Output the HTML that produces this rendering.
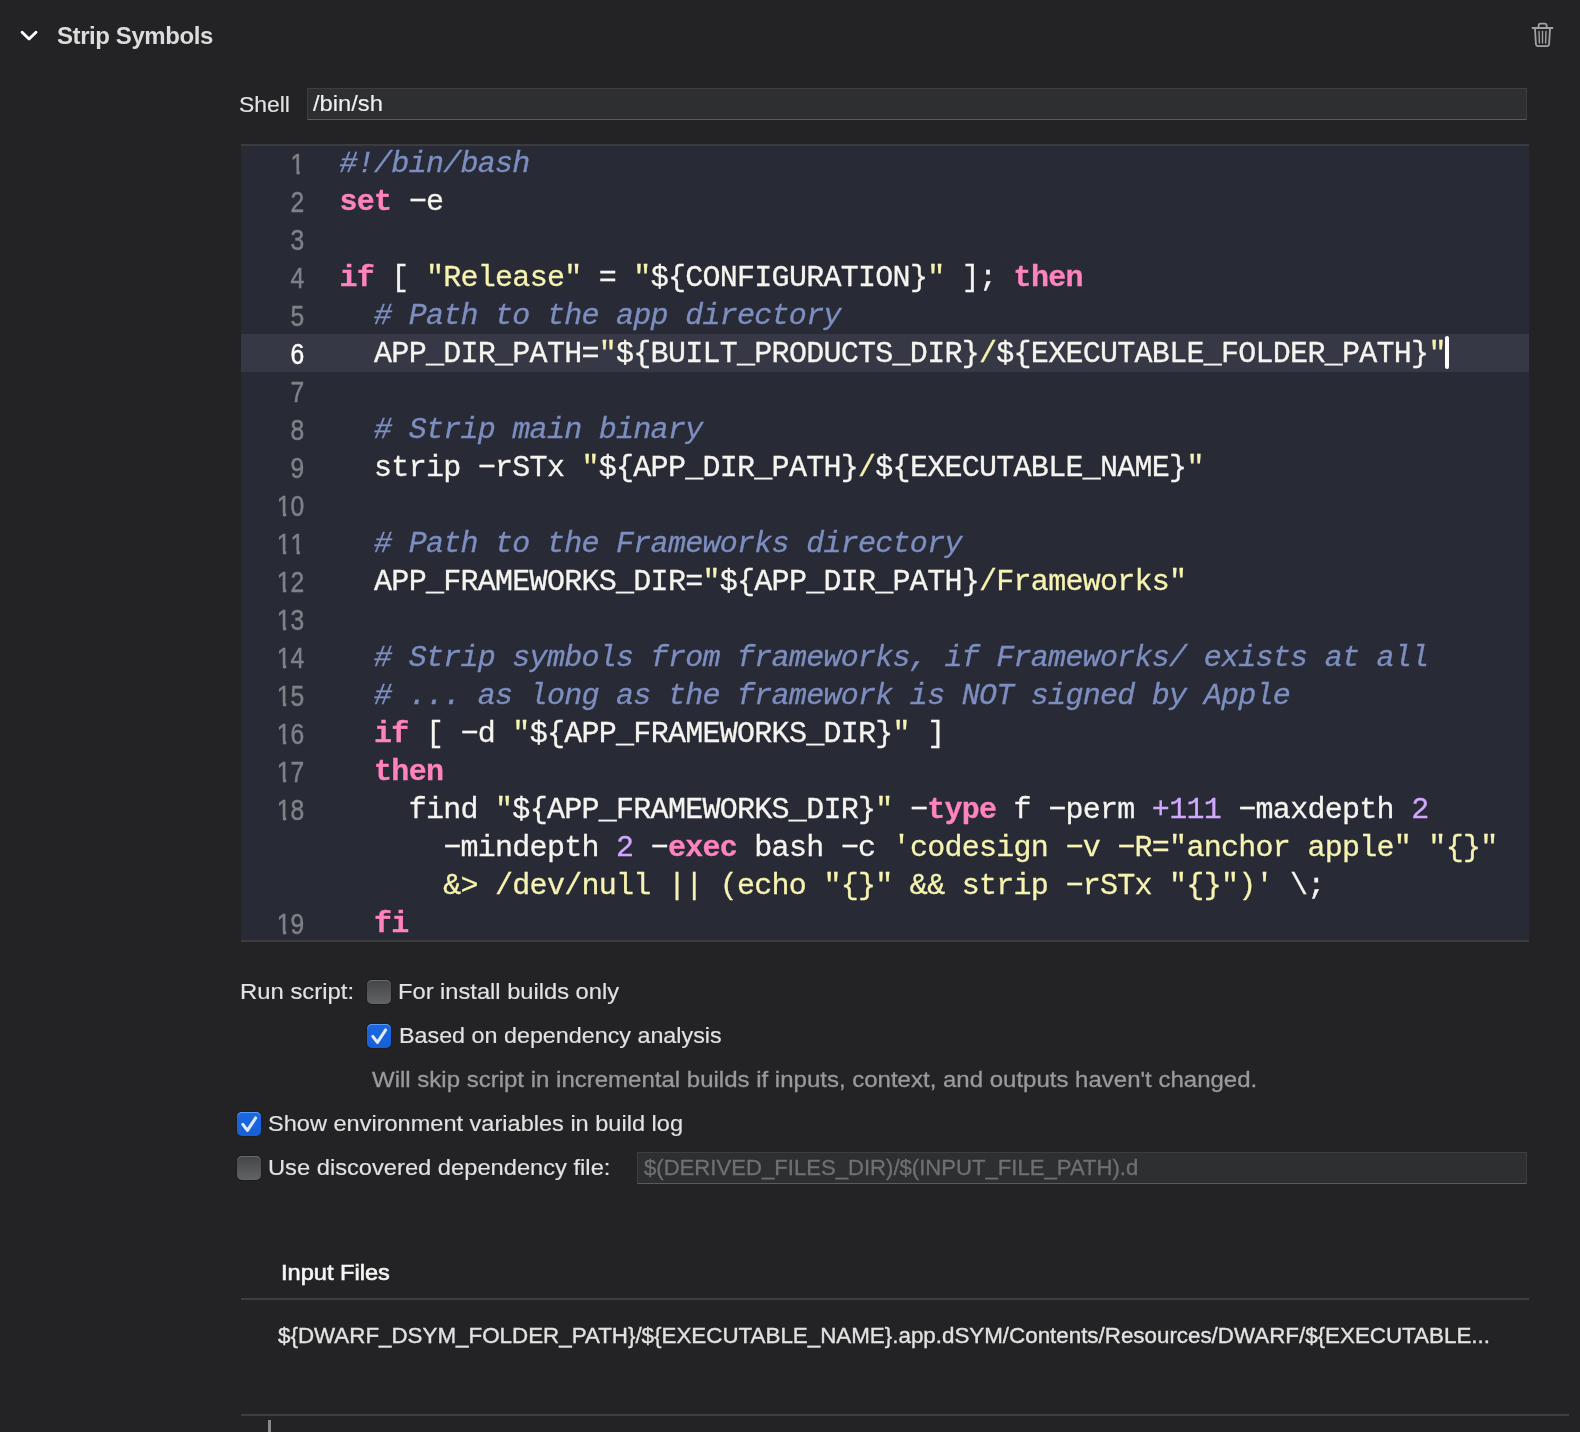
<!DOCTYPE html>
<html><head><meta charset="utf-8">
<style>
html,body{margin:0;padding:0}
body{width:1580px;height:1432px;background:#232325;position:relative;overflow:hidden;font-family:"Liberation Sans",sans-serif;color:#dfdfdf}
.a{position:absolute;white-space:pre;line-height:1}
.ui{-webkit-text-stroke:0.15px currentColor}
#wrap{position:absolute;left:0;top:0;width:1580px;height:1432px;will-change:transform}
.ui{font-size:24px;color:#e2e2e2}
#title{left:57px;top:24px;font-size:24px;font-weight:bold;color:#dcdcdc;letter-spacing:-0.42px}
.field{position:absolute;background:#2e2f31;border:1px solid #3d3e40;border-bottom-color:#5a5b5d;box-sizing:border-box}
#editor{position:absolute;left:241px;top:144px;width:1288px;height:798px;background:#282a36;overflow:hidden}
#editor .bt{position:absolute;left:0;top:0;width:100%;height:2px;background:#3c3c3f}
#editor .bb{position:absolute;left:0;bottom:0;width:100%;height:2px;background:#3c3c3f}
.hl{position:absolute;left:0;top:190px;width:100%;height:38px;background:#363846}
.row{position:absolute;left:0;height:38px;width:100%}
.ln{position:absolute;right:1225px;top:0;height:38px;line-height:38px;font-family:"Liberation Sans",sans-serif;font-size:29px;color:#7f8186;text-align:right;white-space:pre;letter-spacing:0;transform:scaleX(0.85);transform-origin:right center;margin-top:1px;-webkit-text-stroke:0.45px currentColor}
.cur .ln{color:#fff}
.one{display:inline-block;clip-path:polygon(0 0,100% 0,100% 25.4px,11.0px 25.4px,11.0px 100%,7.1px 100%,7.1px 25.4px,0 25.4px)}
.cursor{position:absolute;left:1204px;top:192px;width:4px;height:33px;border-radius:2px;background:#fff}
.cd{position:absolute;left:98.5px;top:1px;height:38px;line-height:38px;font-family:"Liberation Mono",monospace;font-size:30px;letter-spacing:-0.72px;color:#f5f4ef;white-space:pre;-webkit-text-stroke:0.3px currentColor}
.k{color:#ff84bd;font-weight:bold}
.s{color:#f7f3b0}
.c{color:#7d8ec0;font-style:italic}
.n{color:#d0a8ff}
.cb{position:absolute;width:24px;height:24px;border-radius:5px;box-sizing:border-box}
.cbg{background:linear-gradient(#434547,#626365);box-shadow:0 0 0 1px #1d1d1f, inset 0 1px 0 #6c6c6e}
.cbb{background:linear-gradient(#1b68e4,#1660d6);box-shadow:0 0 0 1px #1d1d1f, inset 0 1px 0 #5c9cf8}
.cbb svg{position:absolute;left:0;top:0}
.sep{position:absolute;height:2px;background:#3d3e41}
</style></head><body><div id="wrap">

<svg class="a" style="left:0;top:0" width="60" height="60" viewBox="0 0 60 60"><polyline points="22.1,32.3 29.05,39.0 36.0,32.3" fill="none" stroke="#fff" stroke-width="2.9" stroke-linecap="round" stroke-linejoin="round"/></svg>
<div id="title" class="a">Strip Symbols</div>

<svg class="a" style="left:1520px;top:15px" width="45" height="40" viewBox="1520 15 45 40">
<g fill="none" stroke="#a2a2a4" stroke-width="1.8" stroke-linecap="round">
<line x1="1532.5" y1="28" x2="1552.5" y2="28"/>
<path d="M1538.6 27.5 V25.6 Q1538.6 23.6 1540.6 23.6 H1544.6 Q1546.6 23.6 1546.6 25.6 V27.5"/>
<path d="M1535 29 L1535.9 44 Q1536.1 46.2 1538.3 46.2 H1546.7 Q1548.9 46.2 1549.1 44 L1550 29"/>
<line x1="1539" y1="31.5" x2="1539.4" y2="43" stroke-width="1.4"/>
<line x1="1542.5" y1="31.5" x2="1542.5" y2="43" stroke-width="1.4"/>
<line x1="1546" y1="31.5" x2="1545.6" y2="43" stroke-width="1.4"/>
</g></svg>

<div class="a ui" style="left:238.60px;top:93.60px;font-size:22.0px;transform:scaleX(1.0401);transform-origin:0 0">Shell</div>
<div class="field" style="left:307px;top:88px;width:1220px;height:32px"></div>
<div class="a ui" style="left:312.60px;top:93.40px;font-size:22.0px;transform:scaleX(1.0781);transform-origin:0 0;color:#f0f0f0">/bin/sh</div>

<div id="editor">
<div class="hl"></div>
<div class="row" style="top:0px"><div class="ln"><span class="one">1</span></div><div class="cd"><span class="c">#!/bin/bash</span></div></div>
<div class="row" style="top:38px"><div class="ln">2</div><div class="cd"><span class="k">set</span> −e</div></div>
<div class="row" style="top:76px"><div class="ln">3</div><div class="cd"></div></div>
<div class="row" style="top:114px"><div class="ln">4</div><div class="cd"><span class="k">if</span> [ <span class="s">"Release"</span> = <span class="s">"</span>${CONFIGURATION}<span class="s">"</span> ]; <span class="k">then</span></div></div>
<div class="row" style="top:152px"><div class="ln">5</div><div class="cd">  <span class="c"># Path to the app directory</span></div></div>
<div class="row cur" style="top:190px"><div class="ln">6</div><div class="cd">  APP_DIR_PATH=<span class="s">"</span>${BUILT_PRODUCTS_DIR}<span class="s">/</span>${EXECUTABLE_FOLDER_PATH}<span class="s">"</span></div></div>
<div class="row" style="top:228px"><div class="ln">7</div><div class="cd"></div></div>
<div class="row" style="top:266px"><div class="ln">8</div><div class="cd">  <span class="c"># Strip main binary</span></div></div>
<div class="row" style="top:304px"><div class="ln">9</div><div class="cd">  strip −rSTx <span class="s">"</span>${APP_DIR_PATH}<span class="s">/</span>${EXECUTABLE_NAME}<span class="s">"</span></div></div>
<div class="row" style="top:342px"><div class="ln"><span class="one">1</span>0</div><div class="cd"></div></div>
<div class="row" style="top:380px"><div class="ln"><span class="one">1</span><span class="one">1</span></div><div class="cd">  <span class="c"># Path to the Frameworks directory</span></div></div>
<div class="row" style="top:418px"><div class="ln"><span class="one">1</span>2</div><div class="cd">  APP_FRAMEWORKS_DIR=<span class="s">"</span>${APP_DIR_PATH}<span class="s">/Frameworks"</span></div></div>
<div class="row" style="top:456px"><div class="ln"><span class="one">1</span>3</div><div class="cd"></div></div>
<div class="row" style="top:494px"><div class="ln"><span class="one">1</span>4</div><div class="cd">  <span class="c"># Strip symbols from frameworks, if Frameworks/ exists at all</span></div></div>
<div class="row" style="top:532px"><div class="ln"><span class="one">1</span>5</div><div class="cd">  <span class="c"># ... as long as the framework is NOT signed by Apple</span></div></div>
<div class="row" style="top:570px"><div class="ln"><span class="one">1</span>6</div><div class="cd">  <span class="k">if</span> [ −d <span class="s">"</span>${APP_FRAMEWORKS_DIR}<span class="s">"</span> ]</div></div>
<div class="row" style="top:608px"><div class="ln"><span class="one">1</span>7</div><div class="cd">  <span class="k">then</span></div></div>
<div class="row" style="top:646px"><div class="ln"><span class="one">1</span>8</div><div class="cd">    find <span class="s">"</span>${APP_FRAMEWORKS_DIR}<span class="s">"</span> −<span class="k">type</span> f −perm <span class="n">+111</span> −maxdepth <span class="n">2</span></div></div>
<div class="row" style="top:684px"><div class="ln"></div><div class="cd">      −mindepth <span class="n">2</span> −<span class="k">exec</span> bash −c <span class="s">'codesign −v −R="anchor apple" "{}"</span></div></div>
<div class="row" style="top:722px"><div class="ln"></div><div class="cd">      <span class="s">&amp;&gt; /dev/null || (echo "{}" &amp;&amp; strip −rSTx "{}")'</span> \;</div></div>
<div class="row" style="top:760px"><div class="ln"><span class="one">1</span>9</div><div class="cd">  <span class="k">fi</span></div></div>
<div class="cursor"></div>
<div class="bt"></div>
<div class="bb"></div>
</div>

<div class="a ui" style="left:240.40px;top:981.30px;font-size:22.0px;transform:scaleX(1.0844);transform-origin:0 0">Run script:</div>
<div class="cb cbg" style="left:367px;top:980px"></div>
<div class="a ui" style="left:398.40px;top:981.30px;font-size:22.0px;transform:scaleX(1.0760);transform-origin:0 0">For install builds only</div>
<div class="cb cbb" style="left:367px;top:1024px"><svg width="24" height="24" viewBox="0 0 24 24"><polyline points="5.8,12.4 10.4,18.4 18.6,6.0" fill="none" stroke="#e2eafa" stroke-width="3.1" stroke-linecap="round" stroke-linejoin="round"/></svg></div>
<div class="a ui" style="left:399.00px;top:1025.30px;font-size:22.0px;transform:scaleX(1.0594);transform-origin:0 0">Based on dependency analysis</div>
<div class="a ui" style="left:372.20px;top:1069.10px;font-size:22.0px;transform:scaleX(1.0911);transform-origin:0 0;color:#9a9a9c;-webkit-text-stroke:0.3px #9a9a9c">Will skip script in incremental builds if inputs, context, and outputs haven't changed.</div>
<div class="cb cbb" style="left:237px;top:1112px"><svg width="24" height="24" viewBox="0 0 24 24"><polyline points="5.8,12.4 10.4,18.4 18.6,6.0" fill="none" stroke="#e2eafa" stroke-width="3.1" stroke-linecap="round" stroke-linejoin="round"/></svg></div>
<div class="a ui" style="left:268.40px;top:1113.30px;font-size:22.0px;transform:scaleX(1.0705);transform-origin:0 0">Show environment variables in build log</div>
<div class="cb cbg" style="left:237px;top:1156px"></div>
<div class="a ui" style="left:268.40px;top:1157.10px;font-size:22.0px;transform:scaleX(1.0768);transform-origin:0 0">Use discovered dependency file:</div>
<div class="field" style="left:637px;top:1152px;width:890px;height:32px"></div>
<div class="a ui" style="left:643.80px;top:1157.30px;font-size:22.0px;transform:scaleX(1.0049);transform-origin:0 0;color:#6f7072;-webkit-text-stroke:0.3px #6f7072">$(DERIVED_FILES_DIR)/$(INPUT_FILE_PATH).d</div>

<div class="a ui" style="left:280.50px;top:1261.50px;font-size:22.0px;transform:scaleX(1.0731);transform-origin:0 0;color:#f6f6f6;-webkit-text-stroke:0.6px #f6f6f6">Input Files</div>
<div class="sep" style="left:241px;top:1298px;width:1288px"></div>
<div class="a ui" style="left:278.00px;top:1325.30px;font-size:22.0px;transform:scaleX(1.0163);transform-origin:0 0;-webkit-text-stroke:0.35px #e2e2e2">${DWARF_DSYM_FOLDER_PATH}/${EXECUTABLE_NAME}.app.dSYM/Contents/Resources/DWARF/${EXECUTABLE...</div>
<div class="sep" style="left:241px;top:1414px;width:1328px"></div>
<div class="a" style="left:268px;top:1420px;width:2.5px;height:12px;background:#8a8a8c"></div>
</div></body></html>
